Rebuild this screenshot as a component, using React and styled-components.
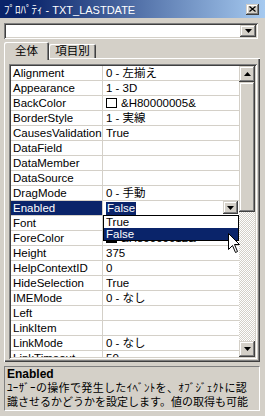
import React from 'react';
import styled, { createGlobalStyle } from 'styled-components';

const FACE = '#d4d0c8';
const NAVY = '#0a246a';
const FONT = `"Liberation Sans", "Noto Sans CJK JP", sans-serif`;

const RAISED = `inset -1px -1px #404040, inset 1px 1px ${FACE}, inset -2px -2px #808080, inset 2px 2px #ffffff`;
const SUNKEN = `inset 1px 1px #808080, inset -1px -1px #ffffff, inset 2px 2px #404040, inset -2px -2px ${FACE}`;

const Global = createGlobalStyle`
  html, body { margin: 0; padding: 0; background: ${FACE}; }
  body { font-family: ${FONT}; }
  * { box-sizing: border-box; }
`;

const Window = styled.div`
  position: relative;
  width: 265px;
  height: 416px;
  background: ${FACE};
  display: flex;
  flex-direction: column;
  overflow: hidden;
  font-family: ${FONT};
  color: #000;
`;

const TitleBar = styled.div`
  flex: none;
  height: 18px;
  background: linear-gradient(to right, ${NAVY} 0%, ${NAVY} 10%, #a6caf0 100%);
  display: flex;
  align-items: center;
  justify-content: space-between;
  padding: 0 6px 0 4px;
`;

const TitleText = styled.span`
  color: #fff;
  font-size: 11px;
  white-space: nowrap;
`;

const CloseButton = styled.div`
  width: 13px;
  height: 11px;
  background: ${FACE};
  box-shadow: ${RAISED};
  display: flex;
  align-items: center;
  justify-content: center;
`;

const Combo = styled.div`
  flex: none;
  margin: 5px 7px 0 4px;
  height: 16px;
  background: #fff;
  box-shadow: ${SUNKEN};
  display: flex;
  justify-content: flex-end;
  padding: 2px;
`;

const ArrowButton = styled.div`
  width: ${(p) => p.$w || 16}px;
  height: ${(p) => p.$h || 12}px;
  flex: none;
  background: ${FACE};
  box-shadow: ${RAISED};
  display: flex;
  align-items: center;
  justify-content: center;
`;

const TabStrip = styled.div`
  flex: none;
  position: relative;
  z-index: 1;
  margin: 3px 0 0 4px;
  height: 18px;
  display: flex;
  align-items: flex-start;
`;

const Tab = styled.div`
  width: ${(p) => p.$w}px;
  height: ${(p) => (p.$active ? 18 : 14)}px;
  margin-top: ${(p) => (p.$active ? 0 : 2)}px;
  background: ${FACE};
  box-shadow: inset 1px 1px #ffffff, inset -1px 0 #404040, inset -2px 0 #808080;
  border-top-left-radius: 2px;
  border-top-right-radius: 2px;
  display: flex;
  justify-content: center;
  padding-top: ${(p) => (p.$active ? 2 : 0)}px;
  font-size: 11.5px;
  line-height: 14px;
`;

const Panel = styled.div`
  flex: none;
  margin: -2px 5px 0 4px;
  height: 304px;
  background: ${FACE};
  box-shadow: inset 1px 1px #ffffff, inset -1px -1px #404040, inset -2px -2px #808080;
  padding: 6px 3px 3px 5px;
`;

const GridFrame = styled.div`
  height: 295px;
  width: 248px;
  padding: 2px;
  box-shadow: ${SUNKEN};
  display: flex;
`;

const Rows = styled.div`
  position: relative;
  flex: 1;
  overflow: hidden;
  background: #fff;
`;

const Row = styled.div`
  height: 15px;
  display: flex;
  border-bottom: 1px solid ${FACE};
  font-size: 11.5px;
  line-height: 14px;
  white-space: nowrap;
`;

const NameCell = styled.div`
  width: 92px;
  flex: none;
  padding-left: 2px;
  border-right: 1px solid ${FACE};
  background: ${(p) => (p.$selected ? NAVY : '#fff')};
  color: ${(p) => (p.$selected ? '#fff' : '#000')};
  overflow: hidden;
`;

const ValueCell = styled.div`
  flex: 1;
  padding-left: 3px;
  display: flex;
  align-items: center;
  overflow: hidden;
`;

const Swatch = styled.span`
  width: 11px;
  height: 10px;
  flex: none;
  border: 1px solid #000;
  background: ${(p) => p.$color};
  margin-right: 4px;
`;

const Highlight = styled.span`
  background: ${NAVY};
  color: #fff;
  padding: 0 1px;
  line-height: 13px;
`;

const Spacer = styled.span`
  flex: 1;
`;

const CellButton = styled(ArrowButton)`
  margin: 0 1px 1px 0;
`;

const DropList = styled.div`
  position: absolute;
  left: 92px;
  top: 149px;
  width: 136px;
  height: 26px;
  background: #fff;
  border: 1px solid #000;
  font-size: 11.5px;
  line-height: 12px;
`;

const DropItem = styled.div`
  height: 12px;
  padding-left: 2px;
  background: ${(p) => (p.$active ? NAVY : '#fff')};
  color: ${(p) => (p.$active ? '#fff' : '#000')};
`;

const ScrollBar = styled.div`
  width: 16px;
  flex: none;
  display: flex;
  flex-direction: column;
`;

const Thumb = styled.div`
  height: 130px;
  flex: none;
  background: ${FACE};
  box-shadow: ${RAISED};
`;

const Track = styled.div`
  flex: 1;
  background: repeating-conic-gradient(#ffffff 0 25%, ${FACE} 0 50%) 0 0 / 2px 2px;
`;

const Description = styled.div`
  flex: none;
  margin: 4px 5px 0 4px;
  height: 45px;
  border-top: 1px solid #808080;
  border-left: 1px solid #808080;
  border-bottom: 1px solid #ffffff;
  border-right: 1px solid #ffffff;
  padding: 0 0 0 2px;
  white-space: nowrap;
  overflow: hidden;
`;

const DescTitle = styled.div`
  font-weight: bold;
  font-size: 12px;
  line-height: 14px;
`;

const DescLine = styled.div`
  font-size: 11px;
  line-height: 14px;
  letter-spacing: ${(p) => p.$spacing || 0}px;
`;

const Cursor = styled.svg`
  position: absolute;
  left: 228px;
  top: 233px;
`;

const Triangle = ({ up }) => (
  <svg width="7" height="4" viewBox="0 0 7 4">
    <path d={up ? 'M3.5 0 L7 4 L0 4 Z' : 'M0 0 L7 0 L3.5 4 Z'} fill="#000" />
  </svg>
);

const rows = [
  { name: 'Alignment', value: '0 - 左揃え' },
  { name: 'Appearance', value: '1 - 3D' },
  { name: 'BackColor', value: '&H80000005&', swatch: '#ffffff' },
  { name: 'BorderStyle', value: '1 - 実線' },
  { name: 'CausesValidation', value: 'True' },
  { name: 'DataField', value: '' },
  { name: 'DataMember', value: '' },
  { name: 'DataSource', value: '' },
  { name: 'DragMode', value: '0 - 手動' },
  { name: 'Enabled', value: 'False', selected: true },
  { name: 'Font', value: 'ＭＳ Ｐゴシック' },
  { name: 'ForeColor', value: '&H80000012&', swatch: '#000000' },
  { name: 'Height', value: '375' },
  { name: 'HelpContextID', value: '0' },
  { name: 'HideSelection', value: 'True' },
  { name: 'IMEMode', value: '0 - なし' },
  { name: 'Left', value: '' },
  { name: 'LinkItem', value: '' },
  { name: 'LinkMode', value: '0 - なし' },
  { name: 'LinkTimeout', value: '50' },
];

export default function App() {
  return (
    <>
      <Global />
      <Window>
        <TitleBar>
          <TitleText>ﾌﾟﾛﾊﾟﾃｨ - TXT_LASTDATE</TitleText>
          <CloseButton>
            <svg width="7" height="6" viewBox="0 0 7 6">
              <path d="M0.5 0.5 L6.5 5.5 M6.5 0.5 L0.5 5.5" stroke="#000" strokeWidth="1.2" />
            </svg>
          </CloseButton>
        </TitleBar>

        <Combo>
          <ArrowButton $w={16} $h={12}>
            <Triangle />
          </ArrowButton>
        </Combo>

        <TabStrip>
          <Tab $w={45} $active>全体</Tab>
          <Tab $w={47}>項目別</Tab>
        </TabStrip>

        <Panel>
          <GridFrame>
            <Rows>
              {rows.map((r) => (
                <Row key={r.name}>
                  <NameCell $selected={r.selected}>{r.name}</NameCell>
                  <ValueCell>
                    {r.swatch && <Swatch $color={r.swatch} />}
                    {r.selected ? (
                      <>
                        <Highlight>{r.value}</Highlight>
                        <Spacer />
                        <CellButton $w={15} $h={13}>
                          <Triangle />
                        </CellButton>
                      </>
                    ) : (
                      r.value
                    )}
                  </ValueCell>
                </Row>
              ))}
              <DropList>
                <DropItem>True</DropItem>
                <DropItem $active>False</DropItem>
              </DropList>
            </Rows>
            <ScrollBar>
              <ArrowButton $w={16} $h={16}>
                <Triangle up />
              </ArrowButton>
              <Thumb />
              <Track />
              <ArrowButton $w={16} $h={16}>
                <Triangle />
              </ArrowButton>
            </ScrollBar>
          </GridFrame>
        </Panel>

        <Description>
          <DescTitle>Enabled</DescTitle>
          <DescLine $spacing={0.35}>ﾕｰｻﾞｰの操作で発生したｲﾍﾞﾝﾄを、ｵﾌﾞｼﾞｪｸﾄに認</DescLine>
          <DescLine>識させるかどうかを設定します。値の取得も可能</DescLine>
        </Description>

        <Cursor width="13" height="21" viewBox="0 0 13 21">
          <path
            d="M0.5 0.5 L0.5 16.5 L4.5 12.5 L7.5 19.5 L9.5 18.5 L6.5 11.5 L11.5 11.5 Z"
            fill="#fff"
            stroke="#000"
            strokeWidth="1"
          />
        </Cursor>
      </Window>
    </>
  );
}
